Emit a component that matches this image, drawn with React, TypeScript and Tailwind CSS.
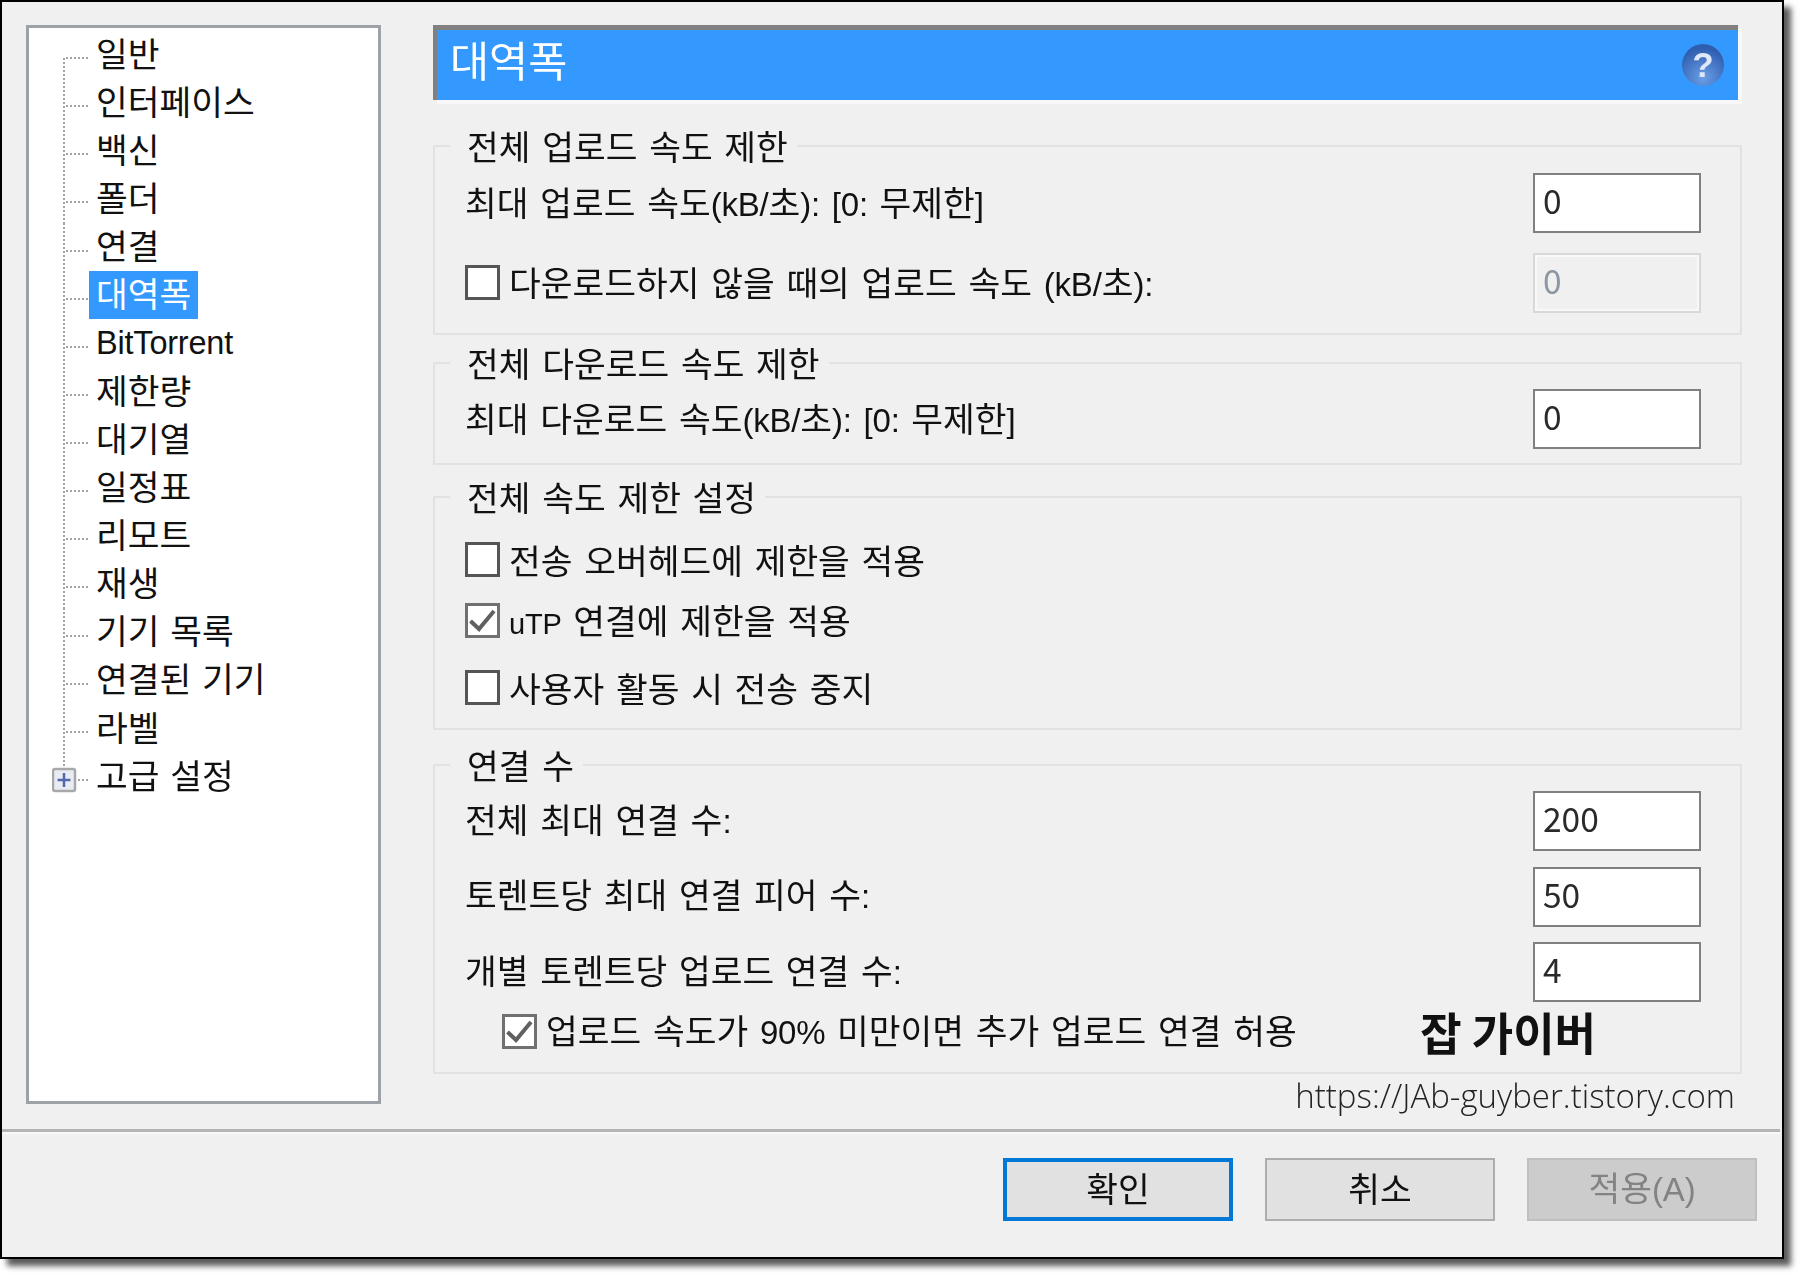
import React from "react";

const tree = ["일반","인터페이스","백신","폴더","연결","대역폭","BitTorrent","제한량","대기열","일정표","리모트","재생","기기 목록","연결된 기기","라벨","고급 설정"];

function T({ children, latin = "text-[33px]" }: { children: string; latin?: string }) {
  const parts = children.split(/([\x21-\x7e]+)/).filter(Boolean);
  return (
    <>
      {parts.map((p, i) =>
        /[\x21-\x7e]/.test(p) ? (
          <span key={i} className={`${latin} font-['Liberation_Sans'] tracking-[-0.2px]`}>{p}</span>
        ) : (
          <span key={i}>{p}</span>
        )
      )}
    </>
  );
}

function Connector({ index }: { index: number }) {
  const first = index === 0;
  const last = index === tree.length - 1;
  return (
    <svg width="37" height="49" className="shrink-0 -mb-px" viewBox="0 0 37 49">
      <path d={`M12 ${first ? 28 : 0}V${last ? 16 : 49}`} stroke="#a3a3a3" strokeWidth="2" strokeDasharray="2 2" fill="none" />
      <path d={`M${last ? 26 : 14} 28H36`} stroke="#a3a3a3" strokeWidth="2" strokeDasharray="2 2" fill="none" />
      {last && (
        <g>
          <rect x="1" y="17" width="22" height="22" rx="2" fill="#e9ecf4" stroke="#a8a8a8" strokeWidth="2.5" />
          <path d="M12 21V35M5.5 28H18.500" stroke="#5068ac" strokeWidth="2.500" />
        </g>
      )}
    </svg>
  );
}

function TreePanel() {
  return (
    <div className="w-[355px] h-[1079px] shrink-0 border-[3px] border-[#9da2a8] bg-white pt-[2px] pl-[23px]">
      {tree.map((t, i) => (
        <div key={t} className="flex items-stretch h-[48.13px]">
          <Connector index={i} />
          <div className={`px-[7px] flex items-center pb-[4px] text-[34.5px] leading-none whitespace-nowrap [word-spacing:3px] ${i === 5 ? "bg-[#3399ff] text-white" : "text-[#111111]"}`}>
            <span><T latin="text-[32.5px]">{t}</T></span>
          </div>
        </div>
      ))}
    </div>
  );
}

function Check({ checked = false }: { checked?: boolean }) {
  return (
    <div className={`w-[35px] h-[35px] shrink-0 border-[3px] bg-white ${checked ? "border-[#707070]" : "border-[#555555]"}`}>
      {checked && (
        <svg width="29" height="29" viewBox="0 0 29 29">
          <path d="M2.500 15L11 23L26 5" fill="none" stroke="#606060" strokeWidth="4" />
        </svg>
      )}
    </div>
  );
}

function Field({ value, disabled = false }: { value: string; disabled?: boolean }) {
  return (
    <input
      readOnly
      disabled={disabled}
      value={value}
      className={`w-[168px] h-[60px] -mr-px shrink-0 border-2 pl-[8px] pb-[8px] text-[33.5px] outline-none ${disabled ? "border-[#d8d8d8] bg-[#f0f0f0] text-[#8c97a5] shadow-[inset_0_0_0_2px_#f8f8f8]" : "border-[#808080] bg-white text-[#2a2a2a]"}`}
    />
  );
}

const labelCls = "text-[34.5px] leading-none text-[#111111] whitespace-nowrap [word-spacing:4px]";

function Group({ title, className, children }: { title: string; className: string; children: React.ReactNode }) {
  return (
    <fieldset className={`border-2 border-[#e2e2e2] pl-[30px] pr-[40px] ${className}`}>
      <legend className={`-ml-[15px] pl-[17px] pr-[9px] h-[36px] ${labelCls} leading-[36px]`}>{title}</legend>
      {children}
    </fieldset>
  );
}

function Row({ label, value, disabled, check, className = "", labelPad = "pb-[2px]" }: { label: string; value: string; disabled?: boolean; check?: boolean; className?: string; labelPad?: string }) {
  return (
    <div className={`flex items-center justify-between ${className}`}>
      <div className={`flex items-center gap-[9px] ${labelPad}`}>
        {check && <Check />}
        <span className={labelCls}><T>{label}</T></span>
      </div>
      <Field value={value} disabled={disabled} />
    </div>
  );
}

function CheckRow({ label, checked, className = "", latin }: { label: string; checked?: boolean; className?: string; latin?: string }) {
  return (
    <div className={`flex items-center gap-[9px] h-[35px] ${className}`}>
      <Check checked={checked} />
      <span className={`${labelCls} pb-[1px]`}><T latin={latin}>{label}</T></span>
    </div>
  );
}

function Help() {
  return (
    <svg width="44" height="44" viewBox="0 0 44 44" className="shrink-0">
      <defs>
        <radialGradient id="h" cx="50%" cy="80%" r="70%">
          <stop offset="0%" stopColor="#6a9fe6" />
          <stop offset="100%" stopColor="#2f5db0" />
        </radialGradient>
      </defs>
      <circle cx="22" cy="22" r="21" fill="url(#h)" />
      <text x="22" y="34" textAnchor="middle" fontSize="35" fontWeight="700" fill="#dfe8f6" fontFamily="'Liberation Sans',sans-serif">?</text>
    </svg>
  );
}

export default function App() {
  return (
    <div className="w-[1800px] h-[1275px] bg-white overflow-hidden" style={{ fontFamily: "'Noto Sans CJK KR','Noto Sans',sans-serif" }}>
      <div className="w-[1784px] h-[1259px] border-2 border-black bg-[#f0f0f0] flex flex-col shadow-[7px_7px_6px_rgba(0,0,0,0.65)] blur-[0.7px]">
        <div className="h-[1125px] flex pl-[24px] pt-[23px] shrink-0">
          <TreePanel />
          <div className="ml-[52px] w-[1309px] flex flex-col">
            <div className="h-[75px] shrink-0 flex items-center justify-between bg-[#3399ff] border-t-[5px] border-l-[4px] border-[#808080] pl-[13px] pr-[13px] shadow-[4px_4px_0_#f8f8f8] w-[1305px]">
              <span className="text-[42.5px] leading-none text-white pb-[12px]">대역폭</span>
              <Help />
            </div>
            <Group title="전체 업로드 속도 제한" className="mt-[28px] pb-[20px]">
              <Row label="최대 업로드 속도(kB/초): [0: 무제한]" value="0" className="mt-[9px]" />
              <Row label="다운로드하지 않을 때의 업로드 속도 (kB/초):" value="0" disabled check className="mt-[20px]" />
            </Group>
            <Group title="전체 다운로드 속도 제한" className="mt-[10px] pb-[14px]">
              <Row label="최대 다운로드 속도(kB/초): [0: 무제한]" value="0" className="mt-[8px]" />
            </Group>
            <Group title="전체 속도 제한 설정" className="mt-[14px] pb-[23px]">
              <CheckRow label="전송 오버헤드에 제한을 적용" className="mt-[27px]" />
              <CheckRow label="uTP 연결에 제한을 적용" latin="text-[29px]" checked className="mt-[26px]" />
              <CheckRow label="사용자 활동 시 전송 중지" className="mt-[32px]" />
            </Group>
            <Group title="연결 수" className="mt-[17px] pb-[19px]">
              <Row label="전체 최대 연결 수:" value="200" className="mt-[8px]" labelPad="pb-[4px]" />
              <Row label="토렌트당 최대 연결 피어 수:" value="50" className="mt-[16px]" labelPad="pb-[5px]" />
              <Row label="개별 토렌트당 업로드 연결 수:" value="4" className="mt-[15px]" labelPad="pb-[3px]" />
              <div className="flex items-center h-[44px] mt-[7px] pl-[37px]">
                <Check checked />
                <span className={`ml-[9px] pb-[2px] ${labelCls}`}><T>업로드 속도가 90% 미만이면 추가 업로드 연결 허용</T></span>
                <span className="ml-auto mr-[104px] text-[45px] leading-none font-bold text-[#111111] whitespace-nowrap">잡 가이버</span>
              </div>
            </Group>
            <div className="h-[44px] flex items-center justify-end pr-[7px] text-[33px] text-[#222222] font-light whitespace-nowrap font-['Open_Sans']">https://JAb-guyber.tistory.com</div>
          </div>
        </div>
        <div className="h-[3px] w-[1778px] mt-[2px] bg-[#b4b4b4] shrink-0 shadow-[0_2px_0_#f8f8f8]" />
        <div className="flex justify-end gap-[32px] pt-[26px] pr-[25px]">
          <button className="w-[230px] h-[63px] border-[4px] border-[#0078d7] bg-[#e1e1e1] text-[34.5px] leading-none text-[#111111] pb-[5px]">확인</button>
          <button className="w-[230px] h-[63px] border-2 border-[#adadad] bg-[#e1e1e1] text-[34.5px] leading-none text-[#111111] pb-[5px]">취소</button>
          <button className="w-[230px] h-[63px] border-2 border-[#bfbfbf] bg-[#cccccc] text-[34.5px] leading-none text-[#838383] pb-[5px]"><T>적용(A)</T></button>
        </div>
      </div>
    </div>
  );
}
